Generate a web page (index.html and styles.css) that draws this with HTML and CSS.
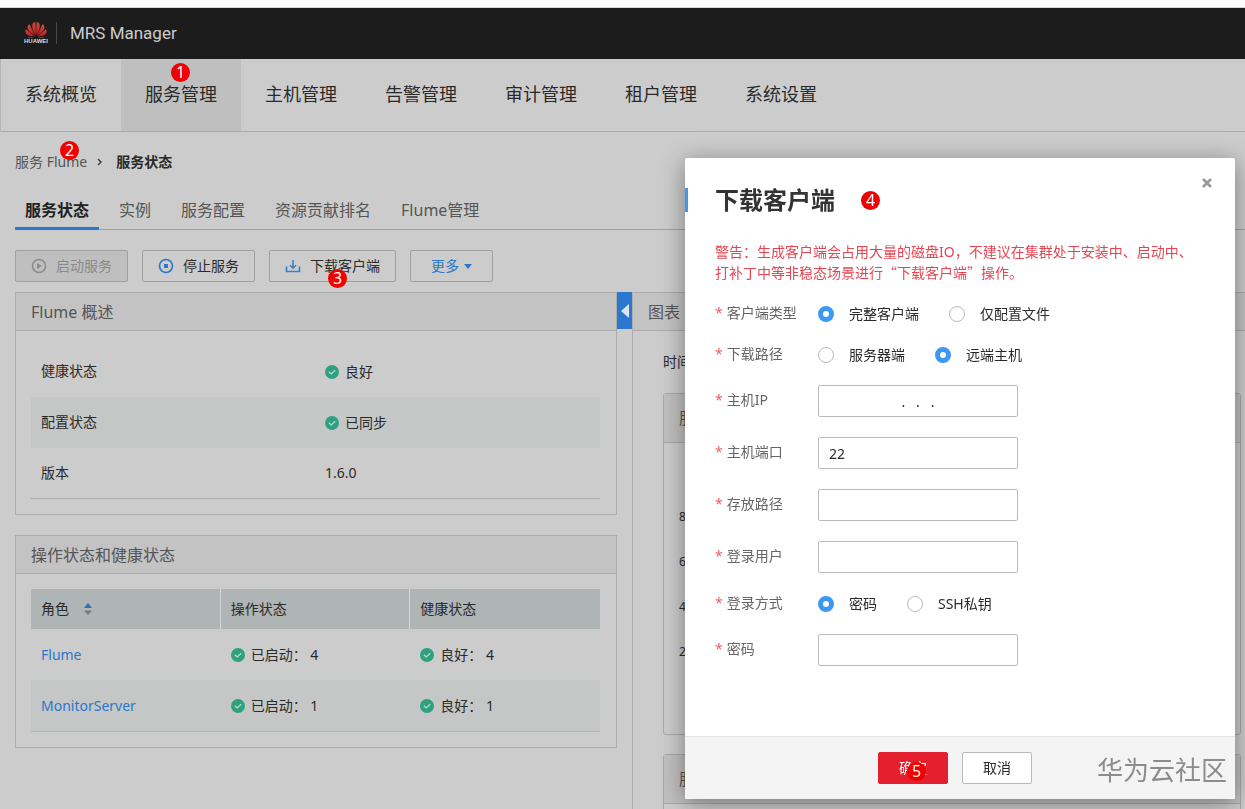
FILE: index.html
```html
<!DOCTYPE html>
<html lang="zh-CN">
<head>
<meta charset="utf-8">
<title>MRS Manager</title>
<link rel="stylesheet" href="styles.css">
</head>
<body>
<svg class="defs" aria-hidden="true">
  <symbol id="ok" viewBox="0 0 14 14"><circle cx="7" cy="7" r="7" fill="#2fa17f"/><path d="M3.8 6.8 6.2 9 10.2 5.2" fill="none" stroke="#b9dccf" stroke-width="1.2"/></symbol>
</svg>
<div class="strip"></div>
<header class="topbar">
  <svg class="logo" viewBox="0 0 24 24" aria-label="HUAWEI" role="img">
    <defs><linearGradient id="petal" x1="0" y1="0" x2="0" y2="1"><stop offset="0" stop-color="#d0523f"/><stop offset="1" stop-color="#b81520"/></linearGradient></defs>
    <g fill="url(#petal)">
      <path d="M11.6 14.6C9.6 11 7.8 7.5 8.3 4 8.6 2 10 1.2 11.200 1 11.8 5 11.9 10 11.6 14.6Z"/>
      <path d="M10.8 14.8C7.5 12.5 3.6 9.6 3.5 6.6 3.5 4.8 4.500 3.8 5.6 3.2 7.2 7 9.5 11 10.8 14.8Z"/>
      <path d="M10.2 15.3C6.5 15.3 3.3 15.2 2 12.6 1.2 11 1.3 9.6 1.9 8.2 4.6 10.5 8 13 10.2 15.3Z"/>
      <path d="M10 15.9C8 17 5.5 17.7 3.6 16.2 5.7 16.1 8 16 10 15.9Z"/>
      <path d="M12.4 14.6C14.4 11 16.2 7.5 15.7 4 15.4 2 14 1.2 12.8 1 12.2 5 12.1 10 12.4 14.6Z"/>
      <path d="M13.2 14.8C16.5 12.5 20.4 9.6 20.5 6.6 20.5 4.8 19.5 3.8 18.4 3.2 16.8 7 14.5 11 13.2 14.8Z"/>
      <path d="M13.8 15.3C17.5 15.3 20.7 15.2 22 12.6 22.8 11 22.7 9.6 22.1 8.2 19.4 10.5 16 13 13.8 15.3Z"/>
      <path d="M14 15.9C16 17 18.5 17.7 20.4 16.2 18.3 16.1 16 16 14 15.9Z"/>
    </g>
    <text x="12" y="22" text-anchor="middle" class="logo-text">HUAWEI</text>
  </svg>
  <span class="product">MRS Manager</span>
</header>
<nav class="mainnav">
  <a href="#">系统概览</a>
  <a href="#" class="current">服务管理<span class="mark mark-nav">1</span></a>
  <a href="#">主机管理</a>
  <a href="#">告警管理</a>
  <a href="#">审计管理</a>
  <a href="#">租户管理</a>
  <a href="#">系统设置</a>
</nav>
<main>
  <div class="crumbs">
    <a href="#">服务 Flume<span class="mark mark-crumb">2</span></a>
    <svg width="6" height="8" viewBox="0 0 6 8"><path d="M1 1 4 4 1 7" fill="none" stroke="#444" stroke-width="1.5"/></svg>
    <strong>服务状态</strong>
  </div>
  <div class="tabs">
    <a href="#" class="active">服务状态</a>
    <a href="#">实例</a>
    <a href="#">服务配置</a>
    <a href="#">资源贡献排名</a>
    <a href="#">Flume管理</a>
  </div>
  <div class="toolbar">
    <button class="btn" disabled><svg width="16" height="16" viewBox="0 0 16 16"><circle cx="8" cy="8" r="6.5" fill="none" stroke="#8c8c8c" stroke-width="1.5"/><path d="M6 5v6l5-3z" fill="#8c8c8c"/></svg>启动服务</button>
    <button class="btn"><svg width="16" height="16" viewBox="0 0 16 16"><circle cx="8" cy="8" r="6.5" fill="none" stroke="#2b78c9" stroke-width="1.6"/><rect x="6" y="6" width="4" height="4" fill="#2b78c9"/></svg>停止服务</button>
    <button class="btn"><svg width="16" height="16" viewBox="0 0 16 16"><path d="M1.5 8.5v5h13v-5M8 2v8M5 7.2 8 10.2 11 7.2" fill="none" stroke="#3a80c8" stroke-width="1.6"/></svg>下载客户端<span class="mark mark-download">3</span></button>
    <button class="btn more">更多<svg width="8" height="5" viewBox="0 0 8 5"><path d="M0 0h8L4 5z" fill="#2b78c9"/></svg></button>
  </div>
  <div class="columns">
    <div class="left">
      <section class="panel">
        <h2>Flume 概述</h2>
        <div class="panel-body overview">
          <dl>
            <div><dt>健康状态</dt><dd><svg class="ok"><use href="#ok"/></svg>良好</dd></div>
            <div class="alt"><dt>配置状态</dt><dd><svg class="ok"><use href="#ok"/></svg>已同步</dd></div>
            <div><dt>版本</dt><dd>1.6.0</dd></div>
          </dl>
        </div>
      </section>
      <section class="panel">
        <h2>操作状态和健康状态</h2>
        <div class="panel-body">
          <table>
            <thead><tr><th><span class="cell">角色<svg class="sort" width="8" height="12" viewBox="0 0 8 12"><path d="M0 5 4 0l4 5z" fill="#2b70b5"/><path d="M0 7.5h8L4 12z" fill="#777"/></svg></span></th><th>操作状态</th><th>健康状态</th></tr></thead>
            <tbody>
              <tr><td><a href="#">Flume</a></td><td><span class="cell"><svg class="ok"><use href="#ok"/></svg>已启动： 4</span></td><td><span class="cell"><svg class="ok"><use href="#ok"/></svg>良好： 4</span></td></tr>
              <tr class="alt"><td><a href="#">MonitorServer</a></td><td><span class="cell"><svg class="ok"><use href="#ok"/></svg>已启动： 1</span></td><td><span class="cell"><svg class="ok"><use href="#ok"/></svg>良好： 1</span></td></tr>
            </tbody>
          </table>
        </div>
      </section>
    </div>
    <button class="collapse" aria-label="收起"><svg width="8" height="14" viewBox="0 0 8 14"><path d="M8 0v14L0 7z" fill="#dce6f0"/></svg></button>
    <section class="charts">
      <h2>图表</h2>
      <p>时间</p>
      <div class="card">
        <h3>服</h3>
        <div class="axis"><span>8</span><span>6</span><span>4</span><span>2</span></div>
      </div>
      <div class="card"><h3>服</h3></div>
    </section>
  </div>
</main>

<form class="dialog" role="dialog" aria-labelledby="dlg-title">
  <button type="button" class="close" aria-label="关闭"><svg width="12" height="12" viewBox="0 0 12 12"><path d="M2 2 10 10M10 2 2 10" stroke="#999" stroke-width="2.6"/></svg></button>
  <div class="dialog-body">
    <h1 id="dlg-title">下载客户端<span class="mark">4</span></h1>
    <p class="warning">警告：生成客户端会占用大量的磁盘IO，不建议在集群处于安装中、启动中、打补丁中等非稳态场景进行<span class="quote">“下载客户端”</span>操作。</p>
    <div class="field choice" role="radiogroup" aria-labelledby="l1"><span class="label" id="l1">客户端类型</span>
      <label><input type="radio" name="type" checked>完整客户端</label><label><input type="radio" name="type">仅配置文件</label></div>
    <div class="field choice" role="radiogroup" aria-labelledby="l2"><span class="label" id="l2">下载路径</span>
      <label><input type="radio" name="path">服务器端</label><label><input type="radio" name="path" checked>远端主机</label></div>
    <div class="field"><label class="label" for="ip">主机IP</label><input class="box ip" id="ip" type="text" value=".   .   ."></div>
    <div class="field"><label class="label" for="port">主机端口</label><input class="box" id="port" type="text" value="22"></div>
    <div class="field"><label class="label" for="dir">存放路径</label><input class="box" id="dir" type="text"></div>
    <div class="field"><label class="label" for="user">登录用户</label><input class="box" id="user" type="text"></div>
    <div class="field choice" role="radiogroup" aria-labelledby="l3"><span class="label" id="l3">登录方式</span>
      <label><input type="radio" name="auth" checked>密码</label><label><input type="radio" name="auth">SSH私钥</label></div>
    <div class="field"><label class="label" for="pw">密码</label><input class="box" id="pw" type="password"></div>
  </div>
  <footer>
    <button type="submit" class="action primary">确定<span class="mark mark-ok">5</span></button>
    <button type="button" class="action">取消</button>
    <span class="watermark">华为云社区</span>
  </footer>
</form>
</body>
</html>
```
FILE: styles.css
```css
* { box-sizing: border-box; }
body {
  margin: 0;
  height: 100vh;
  overflow: hidden;
  background: #ccc;
  color: #2a2a2a;
  font: 14px/20px "Noto Sans", "Noto Sans CJK SC", sans-serif;
}
a { color: inherit; text-decoration: none; }
h1, h2, h3, p, dl, dd { margin: 0; }
button, input { font: inherit; color: inherit; }
.defs { position: absolute; width: 0; height: 0; }

.strip { height: 8px; background: #fdfdfd; border-bottom: 1px solid #d8d8d8; }
.topbar {
  display: flex;
  align-items: center;
  height: 51px;
  padding: 0 24px 2px;
  background: #1c1c1c;
}
.logo { width: 24px; height: 24px; }
.logo-text { font: bold 6px "Liberation Sans", sans-serif; fill: #ddd; }
.product {
  margin-left: 8px;
  padding-left: 13px;
  border-left: 1px solid #4a4a4a;
  color: #ccc;
  font: 17px/22px Roboto, sans-serif;
}

.mainnav { display: flex; height: 73px; border-bottom: 1px solid #aaa; border-left: 1px solid #b4b4b4; }
.mainnav a {
  position: relative;
  width: 120px;
  font-size: 18px;
  line-height: 70px;
  text-align: center;
}
.mainnav .current { background: #bfbfbf; }

.mark {
  display: inline-block;
  width: 19px;
  height: 19px;
  border-radius: 50%;
  background: #f00000;
  color: #fff;
  font: 16px/19px "Noto Sans", sans-serif;
  text-align: center;
}
.mark-nav { position: absolute; left: 50px; top: 4px; }
.mark-crumb { position: absolute; left: 45px; top: -11px; }
.mark-download { position: absolute; left: 58px; top: 18px; }
.mark-ok { position: absolute; left: 28px; top: 9px; }

.crumbs { display: flex; align-items: center; gap: 10px; padding: 20px 15px 0; }
.crumbs a { position: relative; color: #555; }
.crumbs strong { margin-left: 3px; }

.tabs {
  display: flex;
  gap: 10px;
  margin: 20px 0 0 15px;
  height: 38px;
  border-bottom: 1px solid #a0a0a0;
  font-size: 16px;
  color: #555;
}
.tabs a { height: 38px; padding: 0 10px; line-height: 36px; }
.tabs .active { border-bottom: 3px solid #2b78d0; color: #222; font-weight: bold; }

.toolbar { display: flex; gap: 14px; padding: 20px 15px 10px; }
.btn {
  position: relative;
  display: flex;
  align-items: center;
  gap: 9px;
  height: 32px;
  padding: 0 15px;
  border: 1px solid #a0a0a0;
  border-radius: 2px;
  background: transparent;
}
.btn:disabled { background: #bfbfbf; color: #8a8a8a; }
.more { padding: 0 20px; gap: 5px; color: #2b78c9; }

.columns { display: flex; align-items: flex-start; }
.left { flex: none; width: 602px; margin-left: 15px; }
.panel { border: 1px solid #acacac; margin-bottom: 20px; }
.panel h2, .charts h2 {
  height: 38px;
  padding: 0 15px;
  border-bottom: 1px solid #acacac;
  background: #c3c3c3;
  color: #555;
  font-size: 16px;
  font-weight: normal;
  line-height: 38px;
}
.panel-body { padding: 15px 16px 15px 15px; }
.overview dl { border-bottom: 1px solid #acacac; }
.overview dl div { display: flex; height: 51px; padding-left: 10px; line-height: 50px; }
.overview dl div:last-child { height: 50px; }
.alt { background: #c5c7c6; }
.overview dt { width: 284px; }
.overview dd, .cell { display: flex; align-items: center; }
.ok { width: 14px; height: 14px; margin-right: 6px; }
.sort { margin-left: 15px; }

table { width: 100%; border-collapse: separate; border-spacing: 0; table-layout: fixed; border-bottom: 1px solid #b0b4b3; }
th, td { padding: 0 10px; text-align: left; }
th { height: 40px; background: #afb4b4; font-weight: normal; border-right: 1px solid #d5d8d8; }
th:last-child { border-right: 0; }
td { height: 51px; }
td a { color: #2b78c9; }

.collapse {
  flex: none;
  display: flex;
  align-items: center;
  justify-content: center;
  width: 15px;
  height: 37px;
  padding: 0;
  border: 0;
  background: #2b78d0;
}
.charts { flex: 1; min-width: 0; border: solid #acacac; border-width: 1px 0 0 1px; }
.charts > p { padding: 21px 30px; }
.card { height: 342px; margin: 0 4px 19px 30px; border: 1px solid #a8a8a8; border-radius: 3px; }
.card h3 {
  height: 49px;
  padding: 0 15px;
  border-bottom: 1px solid #a8a8a8;
  background: #c0c0c0;
  color: #555;
  font-size: 16px;
  font-weight: normal;
  line-height: 48px;
}
.axis { display: flex; flex-direction: column; gap: 25px; padding: 64px 15px; font-size: 12px; }

.dialog {
  position: fixed;
  top: 158px;
  right: 10px;
  width: 550px;
  border-radius: 2px;
  background: #fff;
  box-shadow: 0 4px 24px rgba(0, 0, 0, .4);
}
.dialog-body { padding: 30px 30px 50px; }
.close { position: absolute; top: 19px; right: 22px; display: flex; padding: 0; border: 0; background: none; }
.dialog h1 {
  display: flex;
  align-items: center;
  gap: 26px;
  margin-left: -30px;
  padding-left: 27px;
  border-left: 3px solid #3d98f4;
  font-size: 24px;
  line-height: 24px;
  font-weight: bold;
  color: #333;
}
.warning { margin: 30px 10px 20px 0; color: #e64550; }
.quote { font-family: "Noto Sans CJK SC", sans-serif; }
.field { display: flex; align-items: center; margin-bottom: 20px; }
.choice { height: 22px; margin-bottom: 19px; }
.label { width: 103px; padding-bottom: 2px; color: #666; }
.label::before { content: "*"; margin-right: 4px; color: #f06060; }
.choice label { display: flex; align-items: center; gap: 15px; margin-right: 30px; }
.choice input {
  appearance: none;
  width: 16px;
  height: 16px;
  margin: 0;
  border: 1px solid #bbb;
  border-radius: 50%;
  background: #fff;
}
.choice input:checked { border: 5px solid #3d98f4; }
.box {
  width: 200px;
  height: 32px;
  padding: 0 10px;
  border: 1px solid #bbb;
  border-radius: 2px;
  background: #fff;
}
.ip { text-align: center; }
.dialog footer {
  position: relative;
  display: flex;
  justify-content: center;
  gap: 14px;
  padding: 15px 20px 15px 10px;
  border-top: 1px solid #e6e6e6;
  background: #f4f4f4;
}
.action {
  position: relative;
  width: 70px;
  height: 32px;
  padding: 0;
  border: 1px solid #bbb;
  border-radius: 2px;
  background: #fff;
}
.primary { border-color: #e4202e; background: #e4202e; color: #fff; }
.watermark {
  position: absolute;
  right: 8px;
  top: 16px;
  color: #8c8c8c;
  font-size: 26px;
  line-height: 34px;
}
```
